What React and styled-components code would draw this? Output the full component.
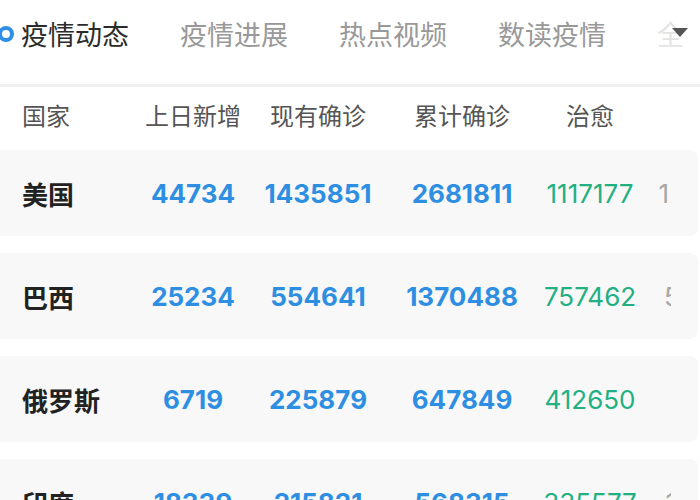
import React from "react";
import styled, { createGlobalStyle } from "styled-components";

const GlobalStyle = createGlobalStyle`
  html, body {
    margin: 0;
    padding: 0;
    background: #ffffff;
    overflow: hidden;
  }
  body {
    font-family: "Noto Sans CJK SC", "Noto Sans", sans-serif;
  }
`;

const Page = styled.div`
  width: 700px;
  height: 500px;
  overflow: hidden;
  background: #fff;
`;

const TabBar = styled.nav`
  height: 84px;
  display: flex;
  align-items: center;
  gap: 51px;
  padding: 0 0 0 21px;
  border-bottom: 3px solid #f0f0f0;
  position: relative;
  white-space: nowrap;
  overflow: hidden;
`;

const Dot = styled.span`
  position: absolute;
  left: -2px;
  top: 26px;
  width: 8px;
  height: 8px;
  border: 4px solid #2f8ee6;
  border-radius: 50%;
`;

const Tab = styled.span`
  font-size: 27px;
  line-height: 1;
  margin-top: -17px;
  color: ${(p) => (p.$active ? "#2b2b2b" : "#999999")};
  ${(p) => p.$faded && "color: #e4e4e4;"}
`;

const More = styled.span`
  position: absolute;
  right: 12px;
  top: 28px;
  width: 0;
  height: 0;
  border-left: 8px solid transparent;
  border-right: 8px solid transparent;
  border-top: 9px solid #555;
`;

const Grid = styled.div`
  display: grid;
  grid-template-columns: 140px 106px 144px 144px 112px 114px;
  align-items: center;
  width: 671px;
  overflow: hidden;
`;

const HeadRow = styled(Grid)`
  height: 63px;
  padding-bottom: 8px;
  box-sizing: border-box;
`;

const HeadCell = styled.div`
  font-size: 24px;
  color: #555;
  text-align: ${(p) => (p.$left ? "left" : "center")};
  padding-left: ${(p) => (p.$left ? "22px" : "0")};
  white-space: nowrap;
`;

const List = styled.div`
  display: flex;
  flex-direction: column;
  gap: 17px;
`;

const Row = styled.div`
  height: 86px;
  margin-right: 2px;
  background: #f8f8f8;
  border-radius: 0 8px 8px 0;
  display: flex;
  align-items: center;
`;

const Country = styled.div`
  padding-left: 22px;
  font-size: 26px;
  font-weight: 700;
  color: #222;
`;

const Num = styled.div`
  text-align: center;
  font-family: Inter, "Noto Sans", sans-serif;
  font-size: 26px;
  font-weight: ${(p) => (p.$tone === "blue" ? 700 : 400)};
  color: ${(p) =>
    p.$tone === "blue" ? "#2e8fe2" : p.$tone === "green" ? "#22b083" : "#a6a6a6"};
  white-space: nowrap;
`;

const tabs = ["疫情动态", "疫情进展", "热点视频", "数读疫情"];
const heads = ["上日新增", "现有确诊", "累计确诊", "治愈"];

const rows = [
  { name: "美国", add: "44734", now: "1435851", total: "2681811", cure: "1117177", dead: "128740" },
  { name: "巴西", add: "25234", now: "554641", total: "1370488", cure: "757462", dead: "57622" },
  { name: "俄罗斯", add: "6719", now: "225879", total: "647849", cure: "412650", dead: "9320" },
  { name: "印度", add: "18339", now: "215821", total: "568315", cure: "335577", dead: "16893" },
];

export default function App() {
  return (
    <Page>
      <GlobalStyle />
      <TabBar>
        <Dot />
        {tabs.map((t, i) => (
          <Tab key={t} $active={i === 0}>
            {t}
          </Tab>
        ))}
        <Tab $faded>全</Tab>
        <More />
      </TabBar>
      <HeadRow>
        <HeadCell $left>国家</HeadCell>
        {heads.map((h) => (
          <HeadCell key={h}>{h}</HeadCell>
        ))}
        <HeadCell />
      </HeadRow>
      <List>
        {rows.map((r) => (
          <Row key={r.name}>
            <Grid>
              <Country>{r.name}</Country>
              <Num $tone="blue">{r.add}</Num>
              <Num $tone="blue">{r.now}</Num>
              <Num $tone="blue">{r.total}</Num>
              <Num $tone="green">{r.cure}</Num>
              <Num>{r.dead}</Num>
            </Grid>
          </Row>
        ))}
      </List>
    </Page>
  );
}
